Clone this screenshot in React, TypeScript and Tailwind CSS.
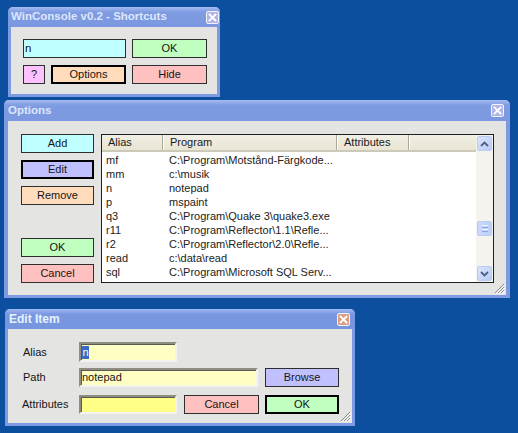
import React from "react";

const rows: [string, string][] = [
  ["mf", "C:\\Program\\Motstånd-Färgkode..."],
  ["mm", "c:\\musik"],
  ["n", "notepad"],
  ["p", "mspaint"],
  ["q3", "C:\\Program\\Quake 3\\quake3.exe"],
  ["r11", "C:\\Program\\Reflector\\1.1\\Refle..."],
  ["r2", "C:\\Program\\Reflector\\2.0\\Refle..."],
  ["read", "c:\\data\\read"],
  ["sql", "C:\\Program\\Microsoft SQL Serv..."],
  ["", "C:\\Program\\TextPad 4\\TextPad..."],
];

function Close({ tone }: { tone: "blue" | "orange" }) {
  return (
    <div
      className={`w-[13px] h-[13px] rounded-[2px] border border-[#f2f4fc] flex items-center justify-center ${
        tone === "blue" ? "bg-[#b1b4e8]" : "bg-[#dc9c84]"
      }`}
    >
      <svg width="9" height="9" viewBox="0 0 9 9">
        <path d="M1.5 1.5 L7.5 7.5 M7.5 1.5 L1.5 7.5" stroke="#ffffff" strokeWidth="1.8" strokeLinecap="square" />
      </svg>
    </div>
  );
}

function Grip() {
  return (
    <svg className="absolute right-[1px] bottom-[1px]" width="12" height="12" viewBox="0 0 12 12">
      <path d="M11 2 L2 11 M11 5 L5 11 M11 8 L8 11" stroke="#8a8a8a" strokeWidth="1" />
      <path d="M12 3 L3 12 M12 6 L6 12 M12 9 L9 12" stroke="#ffffff" strokeWidth="1" />
    </svg>
  );
}

function Btn({
  label,
  bg,
  w,
  h = 19,
  def = false,
  className = "",
}: {
  label: string;
  bg: string;
  w: string;
  h?: number;
  def?: boolean;
  className?: string;
}) {
  return (
    <div
      className={`${w} ${h === 19 ? "h-[19px]" : "h-[20px]"} ${bg} ${
        def ? "border-2 border-black" : "border border-[#2e2e2e]"
      } flex items-center justify-center text-[11px] text-[#151515] leading-none ${className}`}
    >
      {label}
    </div>
  );
}

function ScrollBtn({ dir }: { dir: "up" | "down" }) {
  return (
    <div className="w-[15px] h-[15px] ml-[1px] rounded-[2px] border border-[#b9cbf5] bg-linear-to-br from-[#dbe5fd] to-[#b8cbf7] flex items-center justify-center">
      <svg width="9" height="6" viewBox="0 0 9 6">
        {dir === "up" ? (
          <polyline points="1,5 4.5,1.5 8,5" fill="none" stroke="#4d6185" strokeWidth="1.8" />
        ) : (
          <polyline points="1,1 4.5,4.5 8,1" fill="none" stroke="#4d6185" strokeWidth="1.8" />
        )}
      </svg>
    </div>
  );
}

export default function App() {
  return (
    <div className="relative w-[518px] h-[433px] overflow-hidden bg-[#0c4f9e] font-['Liberation_Sans',Arial,sans-serif]">
      {/* Window 1: Shortcuts */}
      <div className="absolute left-[8px] top-[7px] w-[212px] h-[90px] flex flex-col bg-[#7e9be2] rounded-t-[5px] px-[3px] pb-[3px]">
        <div className="h-[20px] flex items-center justify-between pr-[1px] -mx-[3px] px-[3px] rounded-t-[5px] bg-linear-to-b from-[#a6bbf0] from-0% via-[#7f9ce2] via-25% to-[#7b98e0]">
          <span className="text-[11.5px] font-bold text-[#dce6fa] leading-none pl-[0px]">WinConsole v0.2 - Shortcuts</span>
          <Close tone="blue" />
        </div>
        <div className="flex-1 bg-[#e4e4e2] pl-[12px] pt-[12px]">
          <div className="flex gap-[6px]">
            <div className="w-[103px] h-[19px] bg-[#c0ffff] border border-[#2e2e2e] text-[11.5px] text-[#151515] leading-[17px] pl-[1px]">
              n
            </div>
            <Btn label="OK" bg="bg-[#c0ffc0]" w="w-[75px]" />
          </div>
          <div className="flex gap-[6px] mt-[7px]">
            <Btn label="?" bg="bg-[#ffc0ff]" w="w-[22px]" />
            <Btn label="Options" bg="bg-[#ffdcbc]" w="w-[75px]" def />
            <Btn label="Hide" bg="bg-[#ffc0c0]" w="w-[75px]" />
          </div>
        </div>
      </div>

      {/* Window 2: Options */}
      <div className="absolute left-[4px] top-[100px] w-[506px] h-[198px] flex flex-col bg-[#7e9be2] rounded-t-[5px] px-[4px] pb-[3px]">
        <div className="h-[21px] flex items-center justify-between -mx-[4px] pl-[4px] pr-[6px] rounded-t-[5px] bg-linear-to-b from-[#a6bbf0] from-0% via-[#7f9ce2] via-25% to-[#7b98e0]">
          <span className="text-[11.5px] font-bold text-[#dce6fa] leading-none">Options</span>
          <Close tone="blue" />
        </div>
        <div className="relative flex-1 bg-[#e4e4e2] pl-[13px] pr-[12px] pt-[13px] pb-[12px] flex gap-[7px]">
          <div className="w-[73px] flex flex-col">
            <Btn label="Add" bg="bg-[#c0ffff]" w="w-[73px]" />
            <Btn label="Edit" bg="bg-[#c0c0ff]" w="w-[73px]" def className="mt-[7px]" />
            <Btn label="Remove" bg="bg-[#ffdcbc]" w="w-[73px]" className="mt-[7px]" />
            <div className="flex-1" />
            <Btn label="OK" bg="bg-[#c0ffc0]" w="w-[73px]" />
            <Btn label="Cancel" bg="bg-[#ffc0c0]" w="w-[73px]" className="mt-[7px]" />
          </div>
          <div className="w-[393px] h-[149px] border border-[#1e1e1e] bg-white flex">
            <div className="flex-1 overflow-hidden flex flex-col">
              <div className="h-[17px] shrink-0 flex bg-linear-to-b from-[#f1efe4] to-[#e8e5d4] border-b-2 border-[#cdc9b8] text-[11px] text-[#1a1a1a] leading-[15px]">
                <div className="w-[61px] pl-[6px] border-r border-[#aca899]">Alias</div>
                <div className="w-[174px] pl-[6px] border-r border-[#aca899] border-l border-l-white">Program</div>
                <div className="w-[72px] pl-[6px] border-r border-[#aca899] border-l border-l-white">Attributes</div>
                <div className="flex-1 border-l border-l-white" />
              </div>
              <div className="pt-[1px] flex flex-col">
                {rows.map(([a, p], i) => (
                  <div key={i} className="h-[14px] shrink-0 flex text-[11px] leading-[14px] text-[#222] whitespace-nowrap">
                    <div className="w-[61px] pl-[4px]">{a}</div>
                    <div className="w-[174px] pl-[6px] overflow-hidden">{p}</div>
                  </div>
                ))}
              </div>
            </div>
            <div className="w-[17px] shrink-0 bg-[#f4f3ee] flex flex-col">
              <div className="mt-[1px]">
                <ScrollBtn dir="up" />
              </div>
              <div className="h-[70px] shrink-0" />
              <div className="w-[15px] h-[15px] ml-[1px] rounded-[2px] border border-[#b9cbf5] bg-linear-to-r from-[#cbd9fc] to-[#bccff8] flex flex-col items-center justify-center gap-[1px]">
                <div className="w-[6px] h-[1px] bg-[#f0f4fe]" />
                <div className="w-[6px] h-[1px] bg-[#8fa6e6]" />
                <div className="w-[6px] h-[1px] bg-[#f0f4fe]" />
                <div className="w-[6px] h-[1px] bg-[#8fa6e6]" />
              </div>
              <div className="flex-1" />
              <div className="mb-[1px]">
                <ScrollBtn dir="down" />
              </div>
            </div>
          </div>
          <Grip />
        </div>
      </div>

      {/* Window 3: Edit Item */}
      <div className="absolute left-[5px] top-[309px] w-[350px] h-[117px] flex flex-col bg-[#7d9ae2] rounded-t-[5px] px-[3px] pb-[3px]">
        <div className="h-[20px] flex items-center justify-between -mx-[3px] pl-[4px] pr-[5px] rounded-t-[5px] bg-linear-to-b from-[#a2b8f0] from-0% via-[#7a98e1] via-25% to-[#7695df]">
          <span className="text-[12px] font-bold text-[#e4f2ff] leading-none">Edit Item</span>
          <Close tone="orange" />
        </div>
        <div className="relative flex-1 bg-[#e4e4e2] pl-[15px] pt-[13px] text-[11px] text-[#151515]">
          <div className="flex items-center h-[20px]">
            <div className="w-[56px]">Alias</div>
            <div className="w-[98px] h-[20px] bg-[#ffffc4] border-2 border-t-[#8f8d82] border-l-[#8f8d82] border-r-[#f4f4ef] border-b-[#f4f4ef] shadow-[inset_1px_1px_0_#5a5a54] flex items-center pl-[1px]">
              <span className="bg-[#3a6ac0] text-white leading-[13px] px-[0.5px]">n</span>
            </div>
          </div>
          <div className="flex items-center h-[19px] mt-[6px]">
            <div className="w-[56px]">Path</div>
            <div className="w-[179px] h-[19px] bg-[#ffffc4] border-2 border-t-[#8f8d82] border-l-[#8f8d82] border-r-[#f4f4ef] border-b-[#f4f4ef] shadow-[inset_1px_1px_0_#5a5a54] leading-[15px] pl-[1px]">
              notepad
            </div>
            <Btn label="Browse" bg="bg-[#c0c0ff]" w="w-[74px]" className="ml-[7px]" />
          </div>
          <div className="flex items-center h-[19px] mt-[8px]">
            <div className="w-[56px] -ml-[1px] mr-[1px]">Attributes</div>
            <div className="w-[98px] h-[19px] bg-[#ffff86] border-2 border-t-[#8f8d82] border-l-[#8f8d82] border-r-[#f4f4ef] border-b-[#f4f4ef] shadow-[inset_1px_1px_0_#5a5a54]" />
            <Btn label="Cancel" bg="bg-[#ffc0c0]" w="w-[75px]" className="ml-[7px]" />
            <Btn label="OK" bg="bg-[#c0ffc0]" w="w-[74px]" def className="ml-[6px]" />
          </div>
          <Grip />
        </div>
      </div>
    </div>
  );
}
